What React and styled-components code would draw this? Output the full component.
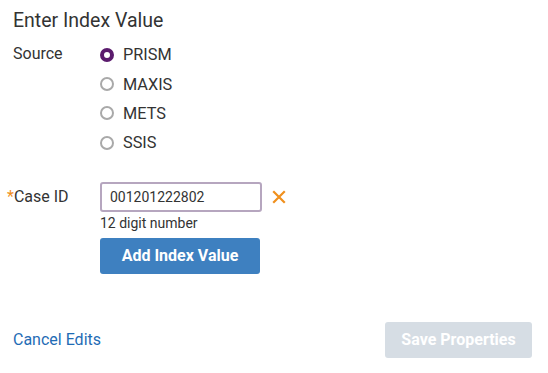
import React, { useState } from 'react';
import styled, { createGlobalStyle } from 'styled-components';

const GlobalStyle = createGlobalStyle`
  body {
    margin: 0;
    background: #ffffff;
    font-family: Roboto, "Liberation Sans", sans-serif;
    color: #333333;
  }
`;

const Page = styled.div`
  width: 548px;
  height: 373px;
  box-sizing: border-box;
  padding: 0 16px 0 13px;
  display: flex;
  flex-direction: column;
`;

const Title = styled.h2`
  margin: 10px 0 0;
  font-size: 19.5px;
  line-height: 22px;
  font-weight: 400;
  color: #333333;
`;

const FieldRow = styled.div`
  display: grid;
  grid-template-columns: 87px 1fr;
  margin-top: ${(p) => p.$top}px;
`;

const Label = styled.label`
  font-size: 16px;
  line-height: ${(p) => p.$lh || 28}px;
  color: #333333;
`;

const Asterisk = styled.span`
  color: #f0901e;
  margin-left: -6px;
`;

const RadioList = styled.div`
  display: flex;
  flex-direction: column;
`;

const RadioOption = styled.label`
  display: flex;
  align-items: center;
  gap: 9px;
  height: 29.4px;
  font-size: 16.3px;
  color: #333333;
  cursor: pointer;
`;

const RadioDot = styled.span`
  width: 14px;
  height: 14px;
  box-sizing: border-box;
  border-radius: 50%;
  border: ${(p) => (p.$checked ? '4px solid #5b1b6d' : '2px solid #a9a9a9')};
  background: #ffffff;
  flex: none;
`;

const Column = styled.div`
  display: flex;
  flex-direction: column;
  align-items: flex-start;
`;

const InputLine = styled.div`
  display: flex;
  align-items: center;
  gap: 10px;
`;

const TextInput = styled.input`
  width: 162px;
  height: 30px;
  box-sizing: border-box;
  border: 2px solid #b6a6bf;
  border-radius: 3px;
  padding: 0 8px;
  font-family: Roboto, "Liberation Sans", sans-serif;
  font-size: 14px;
  color: #333333;
  outline: none;
`;

const ClearButton = styled.button`
  border: none;
  background: none;
  padding: 0;
  width: 14px;
  height: 14px;
  display: flex;
  cursor: pointer;
`;

const Hint = styled.div`
  font-size: 14px;
  line-height: 16px;
  margin-top: 3px;
  color: #333333;
`;

const Button = styled.button`
  height: 36px;
  width: ${(p) => p.$width}px;
  border: none;
  border-radius: 3px;
  background: ${(p) => (p.$disabled ? '#d6dde4' : '#3e80c0')};
  color: #ffffff;
  font-family: Roboto, "Liberation Sans", sans-serif;
  font-weight: 700;
  font-size: 16px;
  cursor: ${(p) => (p.$disabled ? 'default' : 'pointer')};
  margin-top: ${(p) => p.$top || 0}px;
`;

const Footer = styled.div`
  display: flex;
  justify-content: space-between;
  align-items: center;
  margin-top: 48px;
`;

const LinkButton = styled.a`
  font-size: 16px;
  color: #1f6cb5;
  text-decoration: none;
  cursor: pointer;
`;

const sources = ['PRISM', 'MAXIS', 'METS', 'SSIS'];

export default function App() {
  const [source, setSource] = useState('PRISM');
  const [caseId, setCaseId] = useState('001201222802');

  return (
    <>
      <GlobalStyle />
      <Page>
        <Title>Enter Index Value</Title>
        <FieldRow $top={8}>
          <Label $lh={28}>Source</Label>
          <RadioList>
            {sources.map((s) => (
              <RadioOption key={s} onClick={() => setSource(s)}>
                <RadioDot $checked={source === s} />
                {s}
              </RadioOption>
            ))}
          </RadioList>
        </FieldRow>
        <FieldRow $top={24}>
          <Label $lh={30}>
            <Asterisk>*</Asterisk>Case ID
          </Label>
          <Column>
            <InputLine>
              <TextInput value={caseId} onChange={(e) => setCaseId(e.target.value)} />
              <ClearButton onClick={() => setCaseId('')} aria-label="Clear">
                <svg width="14" height="14" viewBox="0 0 14 14">
                  <path d="M2 2 L12 12 M12 2 L2 12" stroke="#f0901e" strokeWidth="2.2" strokeLinecap="square" />
                </svg>
              </ClearButton>
            </InputLine>
            <Hint>12 digit number</Hint>
            <Button $width={160} $top={7}>Add Index Value</Button>
          </Column>
        </FieldRow>
        <Footer>
          <LinkButton>Cancel Edits</LinkButton>
          <Button $width={147} $disabled>Save Properties</Button>
        </Footer>
      </Page>
    </>
  );
}
